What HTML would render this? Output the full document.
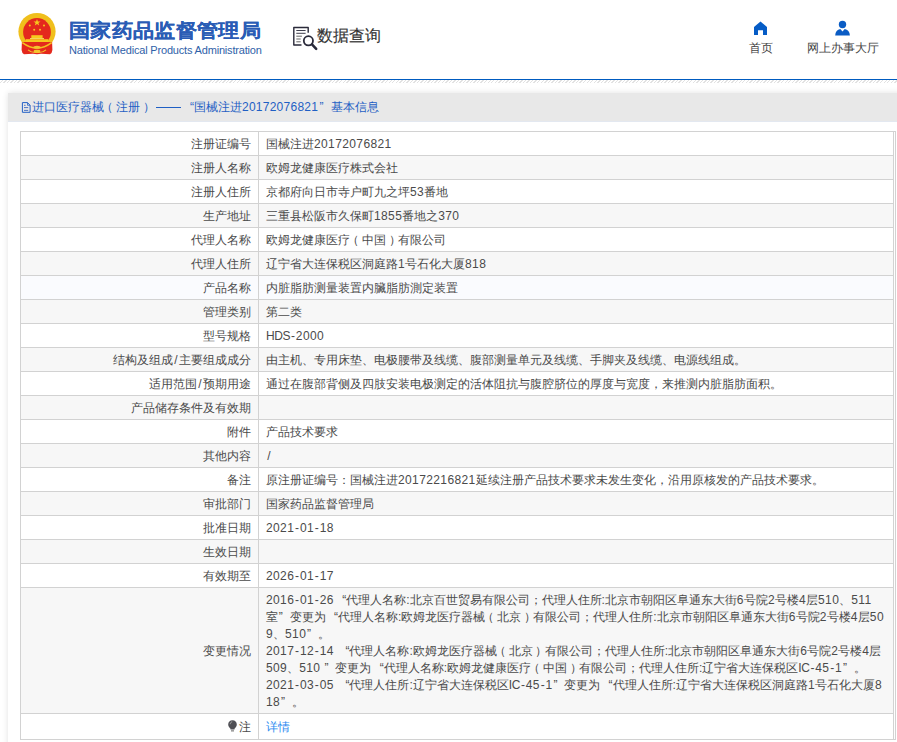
<!DOCTYPE html>
<html><head><meta charset="utf-8">
<style>
html,body{margin:0;padding:0;background:#fff;width:897px;height:742px;overflow:hidden;position:relative;font-family:"Liberation Sans",sans-serif;}
.abs{position:absolute;}
#emblem{left:17px;top:12px;width:40px;height:44px;}
#title{left:69px;top:15.5px;font-size:21px;font-weight:900;color:#2a5cb5;white-space:nowrap;line-height:30px;letter-spacing:0.35px;transform-origin:0 50%;transform:scaleY(0.9);-webkit-text-stroke:0.1px #2a5cb5;}
#sub{left:69px;top:44px;font-size:11px;color:#2f5fa8;white-space:nowrap;line-height:12px;letter-spacing:-0.18px;}
#sicon{left:290px;top:22px;width:30px;height:30px;}
#stext{left:317px;top:24px;font-size:16px;color:#333;-webkit-text-stroke:0.15px #333;white-space:nowrap;line-height:24px;}
#home{left:753px;top:21px;width:15px;height:14px;}
#homet{left:749px;top:40px;font-size:12px;color:#444;line-height:16px;white-space:nowrap;}
#user{left:834px;top:20px;width:17px;height:16px;}
#usert{left:807px;top:40px;font-size:12px;color:#444;line-height:16px;white-space:nowrap;}
#bline{left:0;top:79px;width:897px;height:1px;background:#005bc0;}
#hatch{left:0;top:80px;width:897px;height:3px;background:repeating-linear-gradient(135deg,#fff 0,#fff 1.5px,#e2e2e2 1.5px,#e2e2e2 2.5px);}
#panel{left:8px;top:93px;width:920px;height:700px;background:#fff;box-shadow:0 0 6px rgba(0,0,0,0.12);}
#phead{left:8px;top:93px;width:920px;height:28px;background:#e8e8e8;border-bottom:1px solid #e3e8f0;}
.pt{top:98px;font-size:12px;color:#1f5fc4;white-space:nowrap;line-height:18px;}

#tbl{left:20px;top:131px;border-collapse:collapse;table-layout:fixed;width:874px;font-size:12px;color:#4a4a4a;}
#tbl td{border:1px solid #d2d2d2;padding:4px 7px 2px 7px;line-height:17px;vertical-align:middle;white-space:nowrap;}
#tbl td.l{text-align:right;padding-right:7px;}
#tbl tr:nth-child(even) td{background:#f7f7f7;}
#tbl tr.hl td{background:#fafbfe;}
#tbl tr.last td{height:19px;}
#rborder{left:895px;top:131px;width:1px;height:609px;background:#d2d2d2;}
#bborder{left:893px;top:739px;width:3px;height:1px;background:#d2d2d2;}
#tborder{left:893px;top:131px;width:3px;height:1px;background:#d2d2d2;}
.n{letter-spacing:0.38px;}
.h{display:inline-block;width:5.7px;text-align:center;}
.u{letter-spacing:-0.4px;}
.ql{display:inline-block;width:9px;text-align:right;}
.qr{display:inline-block;width:7.5px;text-align:left;padding-left:0.8px;}
.s{display:inline-block;width:6px;text-align:center;}
.p1{display:inline-block;width:12px;text-indent:-3px;}
.p2{display:inline-block;width:12px;text-indent:2.5px;}
.bulb{width:9px;height:12px;vertical-align:-1px;margin-right:2px;}
a{color:#2b8af0;text-decoration:none;}
</style></head><body>
<svg id="emblem" class="abs" viewBox="0 0 40 44">
  <circle cx="20" cy="19.5" r="18.6" fill="#f0bf1c"/>
  <circle cx="20" cy="20" r="13.9" fill="#e4291d"/>
  <polygon points="20,6.9 20.9,9.4 23.5,9.4 21.4,11 22.2,13.5 20,12 17.8,13.5 18.6,11 16.5,9.4 19.1,9.4" fill="#f7c81e"/>
  <circle cx="12.8" cy="13.5" r="1" fill="#f7c81e"/>
  <circle cx="27" cy="13.5" r="1" fill="#f7c81e"/>
  <circle cx="17.2" cy="17.8" r="1" fill="#f7c81e"/>
  <circle cx="23" cy="17.8" r="1" fill="#f7c81e"/>
  <rect x="14.3" y="23.2" width="11.3" height="2.8" fill="#f7c81e"/>
  <rect x="13" y="26" width="14" height="1.2" fill="#f5d25a"/>
  <rect x="8.8" y="27.2" width="22.6" height="2.8" fill="#f7c81e"/>
  <path d="M4.9,30 H35.1 L35.4,38 Q35,41.5 33,42.3 L24,41.8 Q20,42.6 16,41.8 L7,42.3 Q5,41.5 4.6,38 Z" fill="#e4291d"/>
  <path d="M5.3,30.6 Q20,41.5 34.7,30.6" fill="none" stroke="#f3c21e" stroke-width="1.5"/>
  <ellipse cx="20" cy="35.3" rx="3.6" ry="1.5" fill="#f3c530"/>
  <ellipse cx="20" cy="39.2" rx="3.4" ry="1.4" fill="#f3c530"/>
  <path d="M11,37.8 Q15,41.2 20,40.4 Q25,41.2 29,37.8" fill="none" stroke="#f3c530" stroke-width="1.1"/>
</svg>
<div id="title" class="abs">国家药品监督管理局</div>
<div id="sub" class="abs">National Medical Products Administration</div>
<svg id="sicon" class="abs" viewBox="0 0 30 30">
  <path d="M18.2,10.7 V5.5 H3.8 V23 H11.5" fill="none" stroke="#2a2a3a" stroke-width="1.4" stroke-linejoin="round"/>
  <path d="M6.3,8.5 H15.6 M6.3,11.3 H15.6" stroke="#2a2a3a" stroke-width="0.9"/>
  <path d="M6.3,14.2 H11.9 M6.3,17 H10.7 M6.3,19.8 H10.7" stroke="#555" stroke-width="0.9"/>
  <circle cx="18.4" cy="18.8" r="4.6" fill="none" stroke="#2a2a3a" stroke-width="1.8"/>
  <path d="M22,22.4 L26.2,26.8" stroke="#2a2a3a" stroke-width="2.5" stroke-linecap="round"/>
</svg>
<div id="stext" class="abs">数据查询</div>
<svg id="home" class="abs" viewBox="0 0 15 14">
  <path d="M7.5,0.6 L14,6 V14 H10 V9.2 H5 V14 H1 V6 Z" fill="#055cc6"/>
</svg>
<div id="homet" class="abs">首页</div>
<svg id="user" class="abs" viewBox="0 0 17 16">
  <circle cx="8.5" cy="4.5" r="3.7" fill="#0a5cc4"/>
  <path d="M1.2,15.4 C1.3,11.8 3.3,9.4 6.3,8.9 L8.5,11.5 L10.7,8.9 C13.7,9.4 15.8,11.8 15.9,15.4 Z" fill="#0a5cc4"/>
</svg>
<div id="usert" class="abs">网上办事大厅</div>
<div id="bline" class="abs"></div>
<div id="hatch" class="abs"></div>
<div id="panel" class="abs"></div>
<div id="phead" class="abs"></div>
<div id="ptext">
<svg class="abs" style="left:21px;top:101px;width:11px;height:13px" viewBox="0 0 11 13"><path d="M1.4,1.6 H6.5 L9.1,4.3 V11.3 H1.4 Z" fill="none" stroke="#2362c6" stroke-width="1"/><path d="M6.5,1.6 V4.3 H9.1" fill="none" stroke="#2362c6" stroke-width="0.8"/><path d="M3,4.3 H4.6 M3,6.6 H7.2 M3,9.4 H7.2" stroke="#3a66c0" stroke-width="0.9"/></svg>
<span class="abs pt" style="left:32px">进口医疗器械</span>
<span class="abs pt p1" style="left:104px">（</span>
<span class="abs pt" style="left:116px">注册</span>
<span class="abs pt p2" style="left:140px">）</span>
<span class="abs" style="left:156px;top:107px;width:25px;height:1px;background:#1f5fc4"></span>
<span class="abs pt" style="left:190px">“</span>
<span class="abs pt" style="left:194px">国械注进</span>
<span class="abs pt" style="left:242px;letter-spacing:0.25px">20172076821</span>
<span class="abs pt" style="left:319.5px">”</span>
<span class="abs pt" style="left:331px">基本信息</span>
</div>
<table id="tbl" class="abs"><colgroup><col style="width:238px"><col></colgroup>
<tr><td class="l">注册证编号</td><td>国械注进<span class="n">20172076821</span></td></tr>
<tr><td class="l">注册人名称</td><td>欧姆龙健康医疗株式会社</td></tr>
<tr><td class="l">注册人住所</td><td>京都府向日市寺户町九之坪<span class="n">53</span>番地</td></tr>
<tr><td class="l">生产地址</td><td>三重县松阪市久保町<span class="n">1855</span>番地之<span class="n">370</span></td></tr>
<tr><td class="l">代理人名称</td><td>欧姆龙健康医疗<span class="p1">（</span>中国<span class="p2">）</span>有限公司</td></tr>
<tr><td class="l">代理人住所</td><td>辽宁省大连保税区洞庭路<span class="n">1</span>号石化大厦<span class="n">818</span></td></tr>
<tr class="hl"><td class="l">产品名称</td><td>内脏脂肪测量装置内臟脂肪測定装置</td></tr>
<tr><td class="l">管理类别</td><td>第二类</td></tr>
<tr><td class="l">型号规格</td><td><span class="u">HDS</span><span class="h">-</span><span class="n">2000</span></td></tr>
<tr><td class="l">结构及组成<span class="s">/</span>主要组成成分</td><td>由主机、专用床垫、电极腰带及线缆、腹部测量单元及线缆、手脚夹及线缆、电源线组成。</td></tr>
<tr><td class="l">适用范围<span class="s">/</span>预期用途</td><td>通过在腹部背侧及四肢安装电极测定的活体阻抗与腹腔脐位的厚度与宽度，来推测内脏脂肪面积。</td></tr>
<tr><td class="l">产品储存条件及有效期</td><td></td></tr>
<tr><td class="l">附件</td><td>产品技术要求</td></tr>
<tr><td class="l">其他内容</td><td><span class="s">/</span></td></tr>
<tr><td class="l">备注</td><td>原注册证编号：国械注进<span class="n">20172216821</span>延续注册产品技术要求未发生变化，沿用原核发的产品技术要求。</td></tr>
<tr><td class="l">审批部门</td><td>国家药品监督管理局</td></tr>
<tr><td class="l">批准日期</td><td><span class="n">2021</span><span class="h">-</span><span class="n">01</span><span class="h">-</span><span class="n">18</span></td></tr>
<tr><td class="l">生效日期</td><td></td></tr>
<tr><td class="l">有效期至</td><td><span class="n">2026</span><span class="h">-</span><span class="n">01</span><span class="h">-</span><span class="n">17</span></td></tr>
<tr><td class="l">变更情况</td><td class="ch"><span class="n">2016</span><span class="h">-</span><span class="n">01</span><span class="h">-</span><span class="n">26</span> <span class="ql">“</span>代理人名称<span class="c">:</span>北京百世贸易有限公司；代理人住所<span class="c">:</span>北京市朝阳区阜通东大街<span class="n">6</span>号院<span class="n">2</span>号楼<span class="n">4</span>层<span class="n">510</span>、<span class="n">511</span><br>室<span class="qr">”</span> 变更为 <span class="ql">“</span>代理人名称<span class="c">:</span>欧姆龙医疗器械<span class="p1">（</span>北京<span class="p2">）</span>有限公司；代理人住所<span class="c">:</span>北京市朝阳区阜通东大街<span class="n">6</span>号院<span class="n">2</span>号楼<span class="n">4</span>层<span class="n">50</span><br><span class="n">9</span>、<span class="n">510</span><span class="qr">”</span> 。<br><span class="n">2017</span><span class="h">-</span><span class="n">12</span><span class="h">-</span><span class="n">14</span>&nbsp; <span class="ql">“</span>代理人名称<span class="c">:</span>欧姆龙医疗器械<span class="p1">（</span>北京<span class="p2">）</span>有限公司；代理人住所<span class="c">:</span>北京市朝阳区阜通东大街<span class="n">6</span>号院<span class="n">2</span>号楼<span class="n">4</span>层<br><span class="n">509</span>、<span class="n">510</span> <span class="qr">”</span> 变更为 <span class="ql">“</span>代理人名称<span class="c">:</span>欧姆龙健康医疗<span class="p1">（</span>中国<span class="p2">）</span>有限公司；代理人住所<span class="c">:</span>辽宁省大连保税区<span class="u">IC</span><span class="h">-</span><span class="n">45</span><span class="h">-</span><span class="n">1</span><span class="qr">”</span> 。<br><span class="n">2021</span><span class="h">-</span><span class="n">03</span><span class="h">-</span><span class="n">05</span>&nbsp; <span class="ql">“</span>代理人住所<span class="c">:</span>辽宁省大连保税区<span class="u">IC</span><span class="h">-</span><span class="n">45</span><span class="h">-</span><span class="n">1</span><span class="qr">”</span> 变更为 <span class="ql">“</span>代理人住所<span class="c">:</span>辽宁省大连保税区洞庭路<span class="n">1</span>号石化大厦<span class="n">8</span><br><span class="n">18</span><span class="qr">”</span> 。</td></tr>
<tr class="last"><td class="l"><svg class="bulb" viewBox="0 0 9 12"><path d="M4.5,0.3 C7.1,0.3 8.8,2.2 8.8,4.6 C8.8,6.7 7.3,7.7 6.5,8.8 V9.6 H2.5 V8.8 C1.7,7.7 0.2,6.7 0.2,4.6 C0.2,2.2 1.9,0.3 4.5,0.3 Z" fill="#4f4f55"/><path d="M2.2,4.2 C2.3,2.9 3.1,2 4.2,1.8" fill="none" stroke="#bbb" stroke-width="0.8"/><rect x="3" y="10.2" width="3" height="1.3" fill="#888"/></svg>注</td><td><a>详情</a></td></tr>
</table>
<div id="rborder" class="abs"></div><div id="bborder" class="abs"></div><div id="tborder" class="abs"></div>
</body></html>
